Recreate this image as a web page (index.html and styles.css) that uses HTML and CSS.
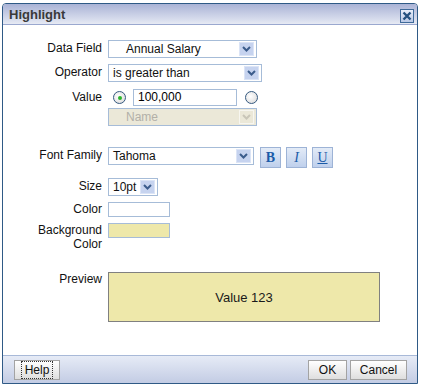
FILE: index.html
```html
<!DOCTYPE html>
<html lang="en">
<head>
<meta charset="utf-8"/>
<title>Highlight</title>
<link rel="stylesheet" href="styles.css">
</head>
<body>
<div class="dialog">
  <div class="titlebar">
    <span class="title">Highlight</span>
    <span class="close">
      <svg width="10" height="10" viewBox="0 0 10 10"><path d="M1.5 1.5 L8.5 8.5 M8.5 1.5 L1.5 8.5" stroke="#24507f" stroke-width="2.4"/></svg>
    </span>
  </div>
  <div class="content">
    <div class="row r-data">
      <div class="lbl">Data Field</div>
      <div class="select w-data"><span class="val indent">Annual Salary</span><span class="arrow"><svg width="9" height="6" viewBox="0 0 9 6"><path d="M1 1 L4.5 4.5 L8 1" stroke="#3b5c8c" stroke-width="2" fill="none"/></svg></span></div>
    </div>
    <div class="row r-op">
      <div class="lbl">Operator</div>
      <div class="select w-op"><span class="val">is greater than</span><span class="arrow"><svg width="9" height="6" viewBox="0 0 9 6"><path d="M1 1 L4.5 4.5 L8 1" stroke="#3b5c8c" stroke-width="2" fill="none"/></svg></span></div>
    </div>
    <div class="row r-value">
      <div class="lbl">Value</div>
      <div class="value-col">
        <div class="value-line">
          <span class="radio on"><span class="dot"></span></span>
          <div class="text-input w-val">100,000</div>
          <span class="radio"></span>
        </div>
        <div class="select disabled w-data"><span class="val indent">Name</span><span class="arrow"><svg width="9" height="6" viewBox="0 0 9 6"><path d="M1 1 L4.5 4.5 L8 1" stroke="#c9c6b8" stroke-width="2" fill="none"/></svg></span></div>
      </div>
    </div>
    <div class="row r-font">
      <div class="lbl">Font Family</div>
      <div class="select w-font"><span class="val">Tahoma</span><span class="arrow"><svg width="9" height="6" viewBox="0 0 9 6"><path d="M1 1 L4.5 4.5 L8 1" stroke="#3b5c8c" stroke-width="2" fill="none"/></svg></span></div>
      <div class="styles">
        <span class="sbtn bold">B</span>
        <span class="sbtn ital">I</span>
        <span class="sbtn under">U</span>
      </div>
    </div>
    <div class="row r-size">
      <div class="lbl">Size</div>
      <div class="select w-size"><span class="val">10pt</span><span class="arrow"><svg width="9" height="6" viewBox="0 0 9 6"><path d="M1 1 L4.5 4.5 L8 1" stroke="#3b5c8c" stroke-width="2" fill="none"/></svg></span></div>
    </div>
    <div class="row r-color">
      <div class="lbl">Color</div>
      <div class="swatch"></div>
    </div>
    <div class="row r-bg">
      <div class="lbl">Background<br>Color</div>
      <div class="swatch yellow"></div>
    </div>
    <div class="row r-preview">
      <div class="lbl">Preview</div>
      <div class="preview">Value 123</div>
    </div>
  </div>
  <div class="footer">
    <span class="btn help"><span class="focus">Help</span></span>
    <span class="spacer"></span>
    <span class="btn ok">OK</span>
    <span class="btn cancel">Cancel</span>
  </div>
</div>
</body>
</html>
```

FILE: styles.css
```css
body {
  margin: 0;
  background: #ffffff;
  font-family: "Liberation Sans", Arial, sans-serif;
  font-size: 12px;
  color: #111;
}
.dialog {
  margin: 3px 0 0 2px;
  width: 414px;
  border: 1px solid #2f5a86;
  border-radius: 4px 4px 0 0;
  background: #fff;
}
.titlebar {
  height: 20px;
  display: flex;
  align-items: center;
  padding: 0 2px 0 6px;
  border-bottom: 1px solid #9aa8cf;
  background: linear-gradient(#aab3d6, #d9deee 80%, #e7eaf4);
  border-radius: 3px 3px 0 0;
}
.title {
  flex: 1;
  font-weight: bold;
  font-size: 13px;
  color: #3a3a3a;
  padding-top: 1px;
}
.close {
  width: 12px;
  height: 12px;
  border: 1px solid #3f6a9a;
  background: linear-gradient(#e8eefa, #b9c8e6);
  display: flex;
  align-items: center;
  justify-content: center;
  margin-top: 3px;
  margin-right: 1px;
}
.content {
  height: 330px;
  padding-top: 14px;
  box-sizing: border-box;
}
.row {
  display: flex;
  align-items: flex-start;
}
.lbl {
  width: 99px;
  margin-right: 6px;
  text-align: right;
  line-height: 16px;
  flex-shrink: 0;
}
.select {
  height: 16px;
  border: 1px solid #a6bcd8;
  background: #fff;
  display: flex;
  align-items: center;
  box-sizing: content-box;
}
.select .val {
  flex: 1;
  padding-left: 4px;
  line-height: 16px;
}
.select .val.indent {
  padding-left: 17px;
}
.arrow {
  width: 15px;
  height: 14px;
  margin-right: 2px;
  background: #c6d3ef;
  border: 1px solid #dbe4f6;
  box-sizing: border-box;
  display: flex;
  align-items: center;
  justify-content: center;
}
.w-data { width: 147px; }
.w-op { width: 152px; }
.w-font { width: 144px; }
.w-size { width: 48px; }
.r-data { margin-top: 1px; }
.r-op { margin-top: 6px; }
.r-value { margin-top: 7px; }
.r-value .lbl { line-height: 14px; padding-top: 1px; }
.value-col {
  display: flex;
  flex-direction: column;
  gap: 2px;
}
.value-line {
  display: flex;
  align-items: center;
  height: 17px;
}
.radio {
  width: 11px;
  height: 11px;
  border: 1px solid #35597f;
  border-radius: 50%;
  background: radial-gradient(circle at 40% 40%, #ffffff, #d6d6d6);
  display: flex;
  align-items: center;
  justify-content: center;
}
.radio.on {
  margin-left: 5px;
  margin-right: 7px;
}
.dot {
  width: 4px;
  height: 4px;
  border-radius: 50%;
  background: #2bb52b;
}
.text-input {
  height: 15px;
  border: 1px solid #a6bcd8;
  padding-left: 4px;
  line-height: 15px;
  font-size: 12px;
  color: #000;
}
.w-val { width: 98px; margin-right: 8px; }
.select.disabled {
  background: #ebe8d8;
  color: #b2b0a8;
}
.select.disabled .arrow {
  background: #ebe8d8;
  border-color: #f7f6f0;
}
.r-font { margin-top: 21px; }
.styles {
  display: flex;
  gap: 5px;
  margin-left: 6px;
}
.sbtn {
  width: 19px;
  height: 19px;
  border: 1px solid #9db3d6;
  background: linear-gradient(#e3ebf7, #bfd0ec);
  color: #1b5ba8;
  font-family: "Liberation Serif", serif;
  font-size: 14px;
  display: flex;
  align-items: center;
  justify-content: center;
}
.sbtn.bold { font-weight: bold; }
.sbtn.ital { font-style: italic; }
.sbtn.under { text-decoration: underline; }
.r-size { margin-top: 10px; }
.r-color { margin-top: 6px; }
.r-color .lbl { line-height: 14px; }
.swatch {
  width: 60px;
  height: 13px;
  border: 1px solid #a6bcd8;
  background: #fff;
}
.swatch.yellow { background: #eee8aa; }
.r-bg { margin-top: 6px; }
.r-bg .lbl { line-height: 14px; }
.r-preview { margin-top: 21px; }
.r-preview .lbl { line-height: 14px; }
.preview {
  width: 270px;
  height: 48px;
  border: 1px solid #808080;
  background: #eee8aa;
  display: flex;
  align-items: center;
  justify-content: center;
  font-size: 13px;
  color: #1a1a1a;
}
.footer {
  height: 27px;
  border-top: 1px solid #a8b9d8;
  background: linear-gradient(#e6ebf6, #c3cce4);
  display: flex;
  align-items: center;
  padding: 0 10px 0 11px;
}
.spacer { flex: 1; }
.btn {
  height: 18px;
  border: 1px solid #a3a3a3;
  background: linear-gradient(#ffffff, #dedede);
  display: flex;
  align-items: center;
  justify-content: center;
  font-size: 12px;
  color: #111;
}
.help { width: 44px; }
.focus {
  border: 1px dotted #333;
  padding: 1px 3px;
  line-height: 14px;
}
.ok { width: 37px; margin-right: 3px; }
.cancel { width: 55px; }
```
